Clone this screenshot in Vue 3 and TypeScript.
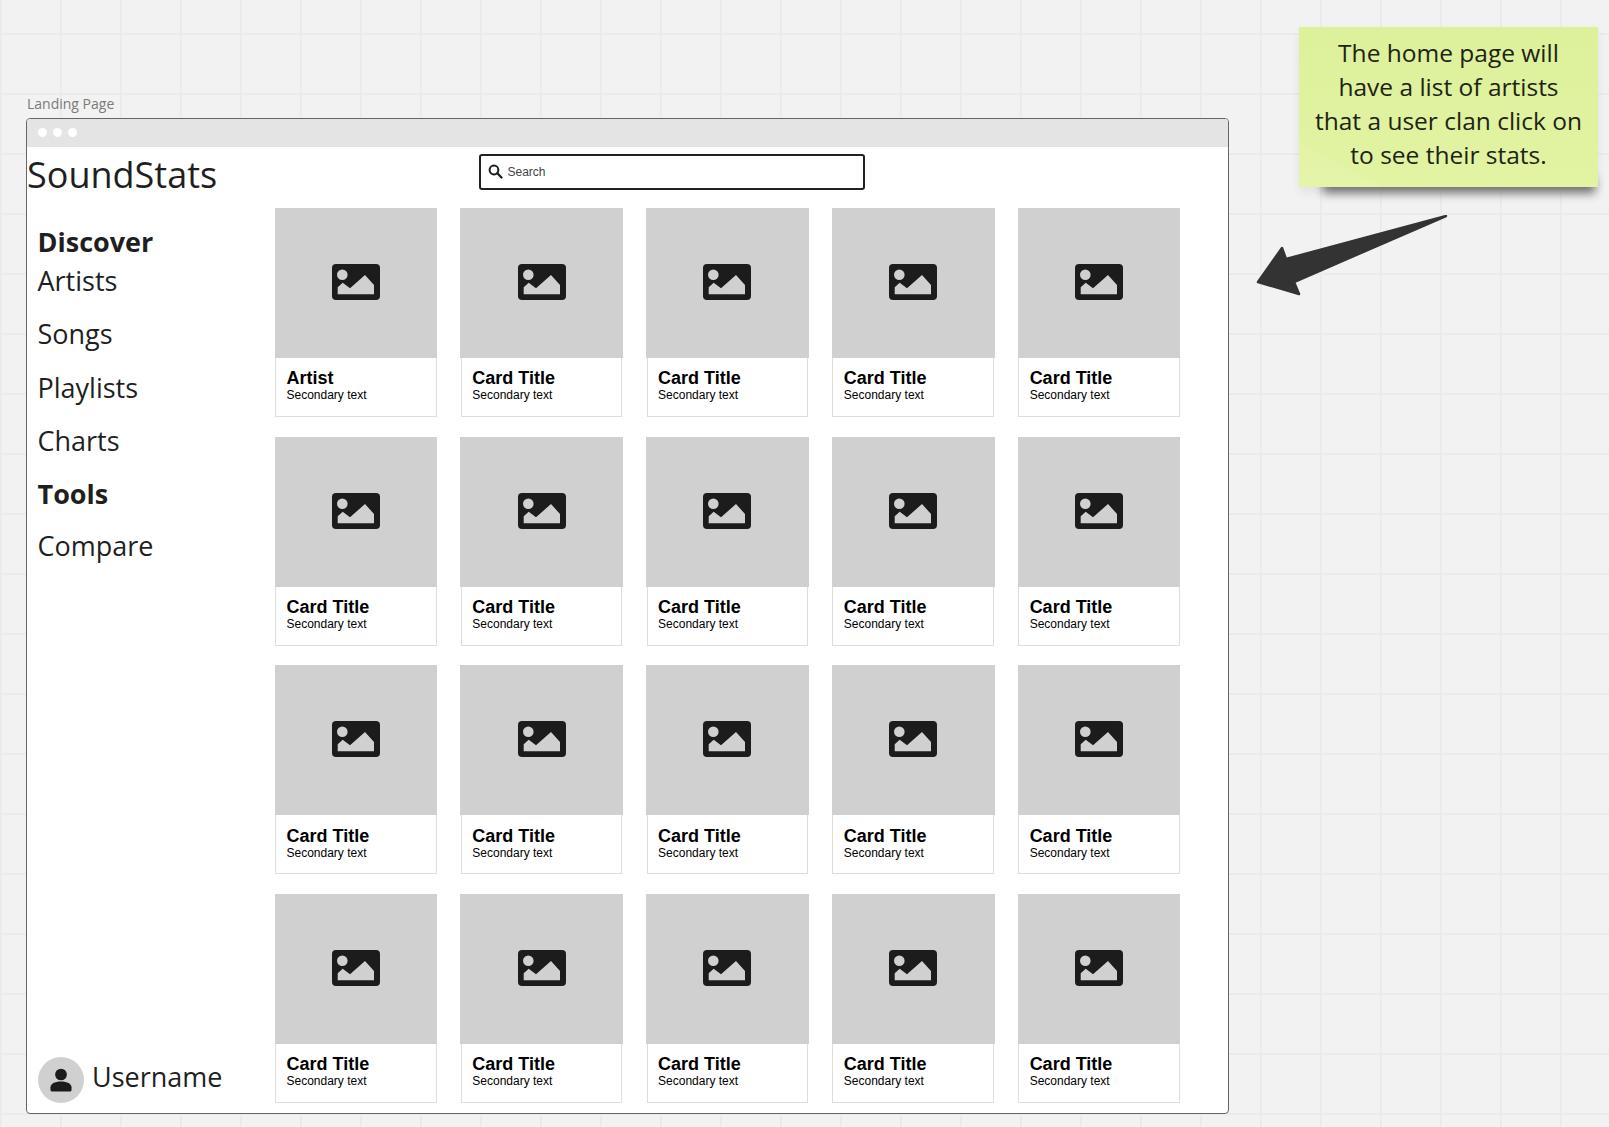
<script setup lang="ts">
interface Card { id: number; title: string }
const cards: Card[] = Array.from({ length: 20 }, (_, i) => ({ id: i, title: i === 0 ? 'Artist' : 'Card Title' }))
const nav = [
  { label: 'Discover', head: true, size: 'tight' },
  { label: 'Artists', head: false, size: '' },
  { label: 'Songs', head: false, size: '' },
  { label: 'Playlists', head: false, size: '' },
  { label: 'Charts', head: false, size: '' },
  { label: 'Tools', head: true, size: 'short' },
  { label: 'Compare', head: false, size: '' },
]
const note = ['The home page will', 'have a list of artists', 'that a user clan click on', 'to see their stats.']
</script>

<template>
  <div class="canvas">
    <div class="frame-label">Landing Page</div>

    <section class="window">
      <div class="titlebar">
        <span class="dot"></span><span class="dot"></span><span class="dot"></span>
      </div>
      <div class="layout">
        <aside class="sidebar">
          <div class="logo">SoundStats</div>
          <nav class="nav">
            <div
              v-for="item in nav"
              :key="item.label"
              class="nav-item"
              :class="[item.size, { head: item.head }]"
            >{{ item.label }}</div>
          </nav>
          <div class="user">
            <span class="avatar">
              <svg width="22" height="24" viewBox="0 0 24 26">
                <circle cx="12" cy="7" r="6.400" fill="#1c1c1c" />
                <path d="M2 25.500a1.500 1.500 0 0 1-1.500-1.500v-3C.5 17 5 14.500 12 14.500s11.500 2.500 11.500 6.500v3a1.500 1.500 0 0 1-1.500 1.500z" fill="#1c1c1c" />
              </svg>
            </span>
            <span class="username">Username</span>
          </div>
        </aside>

        <main class="main">
          <div class="search">
            <svg width="15" height="15" viewBox="0 0 15 15">
              <circle cx="6" cy="6" r="4.400" fill="none" stroke="#1c1c1c" stroke-width="2" />
              <path d="M9.300 9.300 13.500 13.500" stroke="#1c1c1c" stroke-width="2.300" stroke-linecap="round" />
            </svg>
            <span>Search</span>
          </div>
          <div class="grid">
            <article v-for="card in cards" :key="card.id" class="card">
              <div class="thumb">
                <svg width="48" height="36" viewBox="0 0 48 36">
                  <rect width="48" height="36" rx="4" fill="#1c1c1c" />
                  <circle cx="10.300" cy="10.700" r="5.300" fill="#d0d0d0" />
                  <path d="M5.700 30.300V23.300L10.700 18.700 18 24.300 33 11 42 21V30.300z" fill="#d0d0d0" />
                </svg>
              </div>
              <div class="card-body">
                <div class="card-title">{{ card.title }}</div>
                <div class="card-sub">Secondary text</div>
              </div>
            </article>
          </div>
        </main>
      </div>
    </section>

    <aside class="sticky">
      <p><span v-for="line in note" :key="line" class="line">{{ line }}</span></p>
    </aside>

    <svg class="arrow" width="200" height="90" viewBox="0 0 200 90">
      <path
        d="M3 67 L27 33 L31 44 L191 1 L39 67 L44 79 Z"
        fill="#333333"
        stroke="#333333"
        stroke-width="2.500"
        stroke-linejoin="round"
      />
    </svg>
  </div>
</template>

<style>
html, body { margin: 0; padding: 0; background: #f2f2f2; }
</style>

<style scoped>
.canvas {
  position: relative;
  isolation: isolate;
  width: 1609px;
  height: 1127px;
  overflow: hidden;
  background-color: #f2f2f2;
  background-image:
    linear-gradient(to right, #ebebeb 2px, transparent 2px),
    linear-gradient(to bottom, #ebebeb 2px, transparent 2px);
  background-size: 60px 60px;
  background-position: 0 33px;
  font-family: "Open Sans", sans-serif;
  color: #1f1f1f;
}
.frame-label {
  position: absolute;
  left: 27px;
  top: 94px;
  font-size: 14px;
  line-height: 19px;
  color: #7a7a7a;
}
.window {
  position: absolute;
  left: 26px;
  top: 118px;
  width: 1203px;
  height: 996px;
  box-sizing: border-box;
  border: 1.500px solid #666;
  border-radius: 4px;
  background: #fff;
  display: flex;
  flex-direction: column;
  overflow: hidden;
}
.titlebar {
  flex: none;
  height: 27.500px;
  background: #e4e4e4;
  display: flex;
  align-items: center;
  gap: 6px;
  padding-left: 10.500px;
}
.dot { width: 9px; height: 9px; border-radius: 50%; background: #fff; }
.layout {
  flex: 1;
  min-height: 0;
  display: grid;
  grid-template-columns: 248px 1fr;
}
.sidebar { display: flex; flex-direction: column; min-height: 0; }
.logo {
  font-size: 36px;
  line-height: 50px;
  margin-top: 3.500px;
}
.nav { margin-top: 23px; padding-left: 10.500px; }
.nav-item {
  font-size: 27px;
  line-height: 37px;
  height: 53.300px;
}
.nav-item.head { font-weight: 700; }
.nav-item.tight { height: 39px; }
.nav-item.short { height: 51.500px; }
.user {
  margin-top: auto;
  margin-bottom: 10px;
  margin-left: 10.500px;
  display: flex;
  align-items: center;
  gap: 8px;
}
.avatar {
  width: 46.500px;
  height: 46.500px;
  border-radius: 50%;
  background: #d0d0d0;
  display: flex;
  align-items: center;
  justify-content: center;
}
.username { font-size: 27px; line-height: 37px; margin-bottom: 6px; }
.main { padding-top: 7.400px; }
.search {
  width: 386px;
  height: 36px;
  margin-left: 203.500px;
  box-sizing: border-box;
  border: 2px solid #222;
  border-radius: 3px;
  display: flex;
  align-items: center;
  gap: 5px;
  padding-left: 7px;
  font-family: "Liberation Sans", Arial, sans-serif;
  font-size: 12px;
  color: #444;
}
.grid {
  margin-top: 18px;
  display: grid;
  grid-template-columns: repeat(5, 161.700px);
  column-gap: 24.100px;
  row-gap: 19.700px;
}
.card {
  height: 209px;
  box-sizing: border-box;
  border: 1.500px solid #dedede;
  border-top: 0;
  background: #fff;
  display: flex;
  flex-direction: column;
  font-family: "Liberation Sans", Arial, sans-serif;
  color: #000;
}
.thumb {
  flex: none;
  height: 150px;
  margin: 0 -1.500px;
  background: #d0d0d0;
  display: flex;
  align-items: center;
  justify-content: center;
  padding-bottom: 2px;
  box-sizing: border-box;
}
.card-body { padding: 10.500px 0 0 10.500px; }
.card-title { font-size: 18px; line-height: 21px; font-weight: 700; }
.card-sub { font-size: 12px; line-height: 15px; margin-top: -1px; }
.sticky {
  position: absolute;
  left: 1299px;
  top: 27px;
  width: 299px;
  height: 160px;
  box-sizing: border-box;
  background:
    linear-gradient(to top right, rgba(255, 255, 255, 0.07) 14%, transparent 14%),
    linear-gradient(to bottom, #ddf09a, #e2f4a3);
  box-shadow: 0 5px 10px rgba(0, 0, 0, 0.07);
  display: flex;
  align-items: center;
  justify-content: center;
  text-align: center;
}
.sticky::after {
  content: "";
  position: absolute;
  left: 24px;
  right: 3px;
  top: 152px;
  height: 15px;
  background: linear-gradient(to bottom, #555, #999);
  filter: blur(5px);
  z-index: -1;
}
.sticky p {
  margin: 0 0 5.500px;
  font-size: 24.500px;
  line-height: 34px;
  color: #1e2414;
}
.line { display: block; white-space: nowrap; }
.arrow { position: absolute; left: 1255px; top: 215px; }
</style>
